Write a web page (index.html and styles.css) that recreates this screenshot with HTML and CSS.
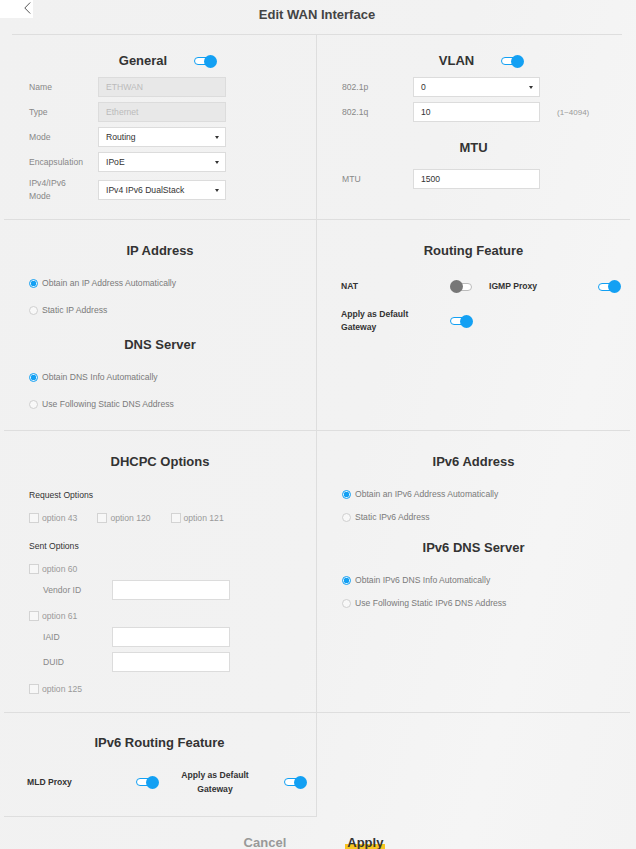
FILE: index.html
```html
<!DOCTYPE html>
<html lang="en">
<head>
  <meta charset="UTF-8" />
  <meta name="viewport" content="width=device-width, initial-scale=1" />
  <title>Edit WAN Interface</title>
  <link rel="stylesheet" href="styles.css">
</head>
<body>

<header class="page-head">
  <button class="back-btn" aria-label="Back">
    <svg width="7" height="12" viewBox="0 0 7 12"><path d="M6.2 0.5 L0.8 6 L6.2 11.5" fill="none" stroke="#555" stroke-width="1"/></svg>
  </button>
  <h1 class="page-title">Edit WAN Interface</h1>
</header>

<div class="panel">

  <!-- General -->
  <section class="cell cell-left">
    <div class="cell-head with-switch">
      <h2>General</h2>
      <span class="switch on"></span>
    </div>
    <div class="fields">
      <div class="field">
        <label>Name</label>
        <input class="input" type="text" value="ETHWAN" disabled>
      </div>
      <div class="field">
        <label>Type</label>
        <input class="input" type="text" value="Ethernet" disabled>
      </div>
      <div class="field">
        <label>Mode</label>
        <div class="select">Routing</div>
      </div>
      <div class="field">
        <label>Encapsulation</label>
        <div class="select">IPoE</div>
      </div>
      <div class="field">
        <label class="two-line">IPv4/IPv6<br>Mode</label>
        <div class="select">IPv4 IPv6 DualStack</div>
      </div>
    </div>
  </section>

  <!-- VLAN / MTU -->
  <section class="cell">
    <div class="cell-head with-switch">
      <h2>VLAN</h2>
      <span class="switch on"></span>
    </div>
    <div class="fields fields-right">
      <div class="field">
        <label>802.1p</label>
        <div class="select">0</div>
      </div>
      <div class="field">
        <label>802.1q</label>
        <input class="input" type="text" value="10">
        <span class="hint">(1~4094)</span>
      </div>
    </div>
    <div class="cell-head sub-head mtu-head">
      <h2>MTU</h2>
    </div>
    <div class="fields fields-right">
      <div class="field">
        <label>MTU</label>
        <input class="input" type="text" value="1500">
      </div>
    </div>
  </section>

  <!-- IP Address / DNS -->
  <section class="cell cell-left">
    <div class="cell-head"><h2>IP Address</h2></div>
    <div class="radio-list">
      <label class="radio"><input type="radio" name="ip" checked> Obtain an IP Address Automatically</label>
      <label class="radio"><input type="radio" name="ip"> Static IP Address</label>
    </div>
    <div class="cell-head sub-head dns-head"><h2>DNS Server</h2></div>
    <div class="radio-list">
      <label class="radio"><input type="radio" name="dns" checked> Obtain DNS Info Automatically</label>
      <label class="radio"><input type="radio" name="dns"> Use Following Static DNS Address</label>
    </div>
  </section>

  <!-- Routing Feature -->
  <section class="cell">
    <div class="cell-head"><h2>Routing Feature</h2></div>
    <div class="features">
      <div class="feature">
        <span class="feature-label">NAT</span>
        <span class="switch"></span>
      </div>
      <div class="feature">
        <span class="feature-label">IGMP Proxy</span>
        <span class="switch on"></span>
      </div>
      <div class="feature">
        <span class="feature-label">Apply as Default Gateway</span>
        <span class="switch on"></span>
      </div>
    </div>
  </section>

  <!-- DHCPC Options -->
  <section class="cell cell-left">
    <div class="cell-head"><h2>DHCPC Options</h2></div>
    <div class="group-title">Request Options</div>
    <div class="check-row">
      <label class="check"><input type="checkbox">option 43</label>
      <label class="check"><input type="checkbox">option 120</label>
      <label class="check"><input type="checkbox">option 121</label>
    </div>
    <div class="group-title sent-title">Sent Options</div>
    <label class="check check-line"><input type="checkbox">option 60</label>
    <div class="field sub-field">
      <label>Vendor ID</label>
      <input class="input" type="text">
    </div>
    <label class="check check-line opt61"><input type="checkbox">option 61</label>
    <div class="field sub-field">
      <label>IAID</label>
      <input class="input" type="text">
    </div>
    <div class="field sub-field duid">
      <label>DUID</label>
      <input class="input" type="text">
    </div>
    <label class="check check-line opt125"><input type="checkbox">option 125</label>
  </section>

  <!-- IPv6 Address / DNS -->
  <section class="cell">
    <div class="cell-head"><h2>IPv6 Address</h2></div>
    <div class="radio-list tight">
      <label class="radio"><input type="radio" name="ip6" checked> Obtain an IPv6 Address Automatically</label>
      <label class="radio"><input type="radio" name="ip6"> Static IPv6 Address</label>
    </div>
    <div class="cell-head sub-head dns6-head"><h2>IPv6 DNS Server</h2></div>
    <div class="radio-list tight">
      <label class="radio"><input type="radio" name="dns6" checked> Obtain IPv6 DNS Info Automatically</label>
      <label class="radio"><input type="radio" name="dns6"> Use Following Static IPv6 DNS Address</label>
    </div>
  </section>

  <!-- IPv6 Routing Feature -->
  <section class="cell cell-left cell-last">
    <div class="cell-head v6-head"><h2>IPv6 Routing Feature</h2></div>
    <div class="features features-v6">
      <div class="feature">
        <span class="feature-label">MLD Proxy</span>
        <span class="switch on"></span>
      </div>
      <div class="feature">
        <span class="feature-label">Apply as Default Gateway</span>
        <span class="switch on"></span>
      </div>
    </div>
  </section>
  <section class="cell cell-empty"></section>

</div>

<div class="actions">
  <button class="btn-cancel">Cancel</button>
  <button class="btn-apply">Apply</button>
</div>

</body>
</html>
```

FILE: styles.css
```css
html, body {
  margin: 0;
  height: 100vh;
  overflow: hidden;
}
body {
  font-family: "Liberation Sans", Arial, sans-serif;
  background: linear-gradient(105deg, #f1f1f1 0%, #f2f2f2 55%, #f5f5f5 80%, #f3f3f3 100%);
  color: #333;
}
.page-head {
  display: grid;
  grid-template-columns: 1fr auto 1fr;
  align-items: start;
  height: 35px;
  margin: 0 14px 0 12px;
  border-bottom: 1px solid #dedede;
  box-sizing: border-box;
}
.back-btn {
  margin-left: -12px;
  width: 33px;
  height: 18px;
  padding: 2px 2px 0 0;
  border: none;
  background: #fff;
  display: flex;
  justify-content: flex-end;
  align-items: flex-start;
  box-sizing: border-box;
  justify-self: start;
}
.page-title {
  margin: 0;
  padding-top: 6px;
  font-size: 13px;
  line-height: 18px;
  color: #444;
  font-weight: bold;
}
.panel {
  display: grid;
  grid-template-columns: 313px 313px;
  grid-template-rows: 185px 211px 282px 104px;
  margin: 0 6px 0 4px;
}
.cell {
  padding: 0 25px;
  border-bottom: 1px solid #dedede;
  box-sizing: border-box;
}
.cell-left {
  border-right: 1px solid #dedede;
}
.cell-empty {
  border-bottom: none;
}
.cell-head {
  display: flex;
  justify-content: center;
  align-items: center;
  height: 16px;
  padding-top: 23px;
}
.cell-head h2 {
  margin: 0;
  font-size: 13px;
  line-height: 16px;
  color: #333;
}
.with-switch {
  padding-top: 18px;
  padding-left: 16px;
  gap: 27px;
}
.sub-head {
  padding-top: 0;
}
.mtu-head { margin-top: 18px; }
.dns-head { margin-top: 20px; }
.dns6-head { margin-top: 16px; }
.v6-head { padding-top: 22px; }

/* switches */
.switch {
  position: relative;
  display: inline-block;
  width: 23px;
  height: 13px;
  flex-shrink: 0;
}
.switch::before {
  content: "";
  position: absolute;
  left: 0;
  right: 1px;
  top: 2.5px;
  height: 8px;
  border: 1px solid #bbb;
  border-radius: 5px;
  background: #fff;
  box-sizing: border-box;
}
.switch::after {
  content: "";
  position: absolute;
  left: 0;
  top: 0;
  width: 13px;
  height: 13px;
  border-radius: 50%;
  background: #777;
}
.switch.on::before {
  border-color: #13a0f3;
  right: 4px;
}
.switch.on::after {
  left: auto;
  right: 0;
  background: #13a0f3;
}

/* form fields */
.fields {
  display: flex;
  flex-direction: column;
  gap: 5px;
  margin-top: 8px;
}
.field {
  display: flex;
  align-items: center;
  min-height: 20px;
}
.field label {
  width: 69px;
  flex-shrink: 0;
  font-size: 8.6px;
  color: #888;
}
.fields-right .field label {
  width: 71px;
}
.mtu-head + .fields {
  margin-top: 13px;
}
.field .two-line {
  line-height: 13px;
  padding: 0;
}
.input,
.select {
  width: 128px;
  height: 20px;
  padding: 0 7px;
  border: 1px solid #dcdcdc;
  background: #fff;
  font-family: inherit;
  font-size: 8.6px;
  color: #333;
  box-sizing: border-box;
  border-radius: 0;
  outline: none;
}
.fields-right .input,
.fields-right .select {
  width: 127px;
}
.input:disabled {
  background: #e8e8e8;
  color: #bbb;
}
.select {
  position: relative;
  display: flex;
  align-items: center;
}
.select::after {
  content: "";
  position: absolute;
  right: 6px;
  top: 8px;
  border-left: 2.5px solid transparent;
  border-right: 2.5px solid transparent;
  border-top: 3.5px solid #333;
}
.hint {
  margin-left: 17px;
  font-size: 8px;
  color: #999;
}

/* radios */
.radio-list {
  display: flex;
  flex-direction: column;
  gap: 13px;
  margin-top: 17px;
}
.radio-list.tight {
  gap: 9px;
}
.radio {
  display: flex;
  align-items: center;
  height: 14px;
  font-size: 8.6px;
  color: #7a7a7a;
}
.radio input {
  appearance: none;
  width: 9px;
  height: 9px;
  margin: 0 4px 0 0;
  border: 1px solid #cfcfcf;
  border-radius: 50%;
  background: #f8f8f8;
  box-sizing: border-box;
}
.radio input:checked {
  border-color: #13a0f3;
  background: radial-gradient(circle, #13a0f3 0 2.6px, #dff1fd 3px);
}

/* routing features */
.features {
  display: grid;
  grid-template-columns: 132px 132px;
  column-gap: 16px;
  row-gap: 15px;
  margin-top: 21px;
  margin-left: -1px;
}
.feature {
  display: flex;
  justify-content: space-between;
  align-items: center;
}
.feature-label {
  max-width: 80px;
  font-size: 8.6px;
  line-height: 13px;
  font-weight: bold;
  color: #333;
}
.features-v6 {
  margin-top: 17px;
}
.features-v6 .feature-label {
  line-height: 14px;
  text-align: center;
}
.cell-last {
  padding-left: 24px;
}

/* dhcpc */
.group-title {
  margin-top: 19px;
  font-size: 8.6px;
  line-height: 12px;
  color: #333;
}
.sent-title {
  margin-top: 15px;
}
.check-row {
  display: flex;
  gap: 20px;
  margin-top: 10px;
}
.check {
  display: flex;
  align-items: center;
  height: 14px;
  font-size: 8.6px;
  color: #9a9a9a;
}
.check input {
  appearance: none;
  width: 10px;
  height: 10px;
  margin: 0 3px 0 0;
  border: 1px solid #d3d3d3;
  background: #f7f7f7;
  box-sizing: border-box;
}
.check-line {
  margin-top: 10px;
}
.opt61 { margin-top: 9px; }
.opt125 { margin-top: 10px; }
.sub-field {
  margin-top: 4px;
  padding-left: 14px;
}
.sub-field .input {
  width: 118px;
}
.duid {
  margin-top: 5px;
}

/* buttons */
.actions {
  display: flex;
  justify-content: center;
  gap: 57px;
  margin-top: 18px;
  padding-right: 9px;
}
.actions button {
  padding: 0 2px;
  border: none;
  background: none;
  font-family: inherit;
  font-size: 13px;
  line-height: 16px;
  font-weight: bold;
}
.btn-cancel {
  color: #999;
}
.btn-apply {
  color: #333;
  background: linear-gradient(to bottom, transparent 9px, #f7c520 9px) !important;
}
```
